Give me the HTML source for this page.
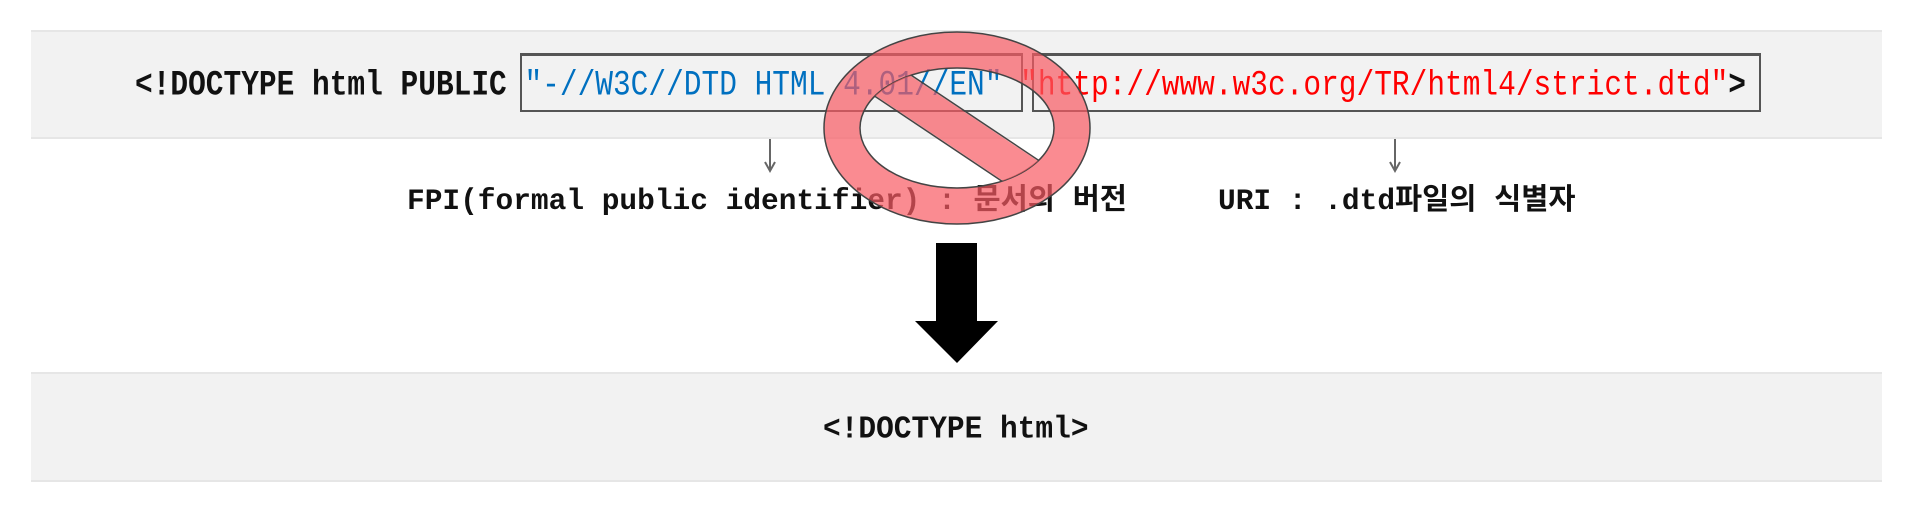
<!DOCTYPE html>
<html><head><meta charset="utf-8">
<style>
html,body{margin:0;padding:0;background:#fff;width:1920px;height:512px;overflow:hidden;position:relative}
.panel{position:absolute;left:31px;width:1851px;background:#f2f2f2;border-top:2px solid #e6e6e6;border-bottom:2px solid #e6e6e6;box-sizing:border-box}
.t{position:absolute;font-family:"Liberation Mono","Noto Sans CJK KR",monospace;white-space:pre;font-size:29.5px;line-height:30px;transform-origin:0 50%}
.box{position:absolute;border:2px solid #555;box-sizing:border-box;top:53px;height:59px;border-top-width:3px}
</style></head><body>
<div class="panel" style="top:30px;height:109px"></div>
<div class="panel" style="top:372px;height:110px"></div>
<div class="box" style="left:520px;width:503px"></div>
<div class="box" style="left:1032px;width:729px"></div>
<div class="t" style="left:135px;top:70px;transform:scaleY(1.18);font-weight:bold;color:#111">&lt;!DOCTYPE html PUBLIC <span style="color:#0070c0;font-weight:normal">"-//W3C//DTD HTML 4.01//EN"</span> <span style="color:#ff0000;font-weight:normal">"http://www.w3c.org/TR/html4/strict.dtd"</span>&gt;</div>
<div class="t" style="left:407px;top:186px;font-weight:bold;color:#111;transform:scaleY(1.0)">FPI(formal public identifier) : 문서의 버전</div>
<div class="t" style="left:1218px;top:186px;font-weight:bold;color:#111">URI : .dtd파일의 식별자</div>
<div class="t" style="left:823px;top:414px;font-weight:bold;color:#111;transform:scaleY(1.08)">&lt;!DOCTYPE html&gt;</div>
<svg width="1920" height="512" style="position:absolute;left:0;top:0">
<g stroke="#666" stroke-width="2" fill="none">
<line x1="770" y1="139" x2="770" y2="170"/><polyline points="765,162 770,171 775,162"/>
<line x1="1395" y1="139" x2="1395" y2="170"/><polyline points="1390,162 1395,171 1400,162"/>
</g>
<polygon points="936,243 977,243 977,321 998,321 957,363 915,321 936,321" fill="#000"/>
<defs><clipPath id="c"><ellipse cx="957" cy="128" rx="97" ry="60"/></clipPath></defs>
<path fill-rule="evenodd" fill="rgba(248,90,98,0.7)" stroke="#444" stroke-width="1.5"
 d="M824,128 a133,96 0 1,0 266,0 a133,96 0 1,0 -266,0 Z M860,128 a97,60 0 1,0 194,0 a97,60 0 1,0 -194,0 Z"/>
<g clip-path="url(#c)"><line x1="850" y1="57" x2="1070" y2="204" stroke="rgba(248,90,98,0.7)" stroke-width="36"/>
<line x1="860" y1="41" x2="1080" y2="188" stroke="#444" stroke-width="1.5"/>
<line x1="840" y1="73" x2="1060" y2="220" stroke="#444" stroke-width="1.5"/></g>
</svg>
</body></html>
